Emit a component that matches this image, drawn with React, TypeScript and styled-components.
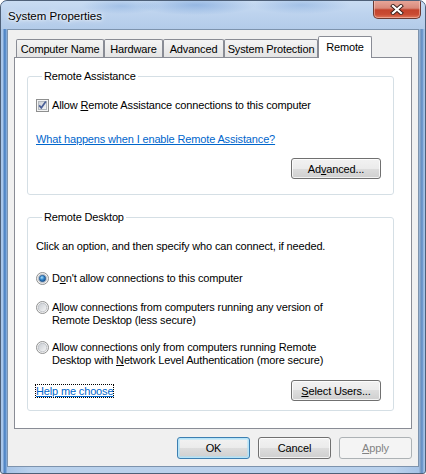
import React from "react";
import styled, { createGlobalStyle } from "styled-components";

const GlobalStyle = createGlobalStyle`
  html, body {
    margin: 0;
    padding: 0;
    background: #ffffff;
  }
  body {
    font-family: "Liberation Sans", Arial, sans-serif;
    font-size: 11px;
    letter-spacing: -0.15px;
    color: #000;
  }
`;

const Window = styled.div`
  width: 426px;
  height: 474px;
  box-sizing: border-box;
  border: 1px solid #4e6078;
  border-radius: 7px 7px 3px 3px;
  overflow: hidden;
  display: flex;
  flex-direction: column;
  background: linear-gradient(
    to right,
    #a9c6e9 0,
    #a9c6e9 2px,
    #4f84c4 3px,
    #5f91cc 5px,
    #a6c3e6 6px,
    #b9d1ec 30px,
    #b9d1ec 394px,
    #a6c3e6 418px,
    #8aa6c6 419px,
    #5d8bc4 421px,
    #a3c2e6 423px
  );
`;

const TitleBar = styled.div`
  height: 28px;
  flex-shrink: 0;
  display: flex;
  justify-content: space-between;
  align-items: flex-start;
  background:
    radial-gradient(ellipse 60px 10px at 195px 4px, rgba(60, 120, 200, 0.35), transparent),
    radial-gradient(ellipse 40px 8px at 120px 5px, rgba(60, 120, 200, 0.25), transparent),
    radial-gradient(ellipse 50px 9px at 300px 4px, rgba(60, 120, 200, 0.25), transparent),
    linear-gradient(to bottom, #c9dcf2 0%, #bdd3ee 45%, #b3cbe9 100%);
`;

const Title = styled.span`
  margin: 8px 0 0 7px;
  font-size: 11.5px;
  letter-spacing: 0;
  line-height: 14px;
  color: #000;
  text-shadow: 0 0 6px #ffffff, 0 0 3px #ffffff;
`;

const CloseButton = styled.div`
  width: 48px;
  height: 19px;
  margin: -1px 4px 0 0;
  box-sizing: border-box;
  border: 1px solid #6b3a33;
  border-top: none;
  border-radius: 0 0 5px 5px;
  display: flex;
  align-items: center;
  justify-content: center;
  background: linear-gradient(
    to bottom,
    #e9a99c 0%,
    #d98a7b 45%,
    #c4432d 55%,
    #c94b33 80%,
    #e0775c 100%
  );
  box-shadow: inset 0 0 0 1px rgba(255, 220, 210, 0.45);
`;

const Client = styled.div`
  flex: 1;
  margin: 0 6px 6px;
  border: 1px solid #7d93ad;
  background: #f0f0f0;
  display: flex;
  flex-direction: column;
  padding: 6px 6px 0 6px;
`;

const TabStrip = styled.div`
  display: flex;
  align-items: flex-end;
  height: 21px;
  padding-left: 2px;
  position: relative;
  z-index: 1;
`;

const Tab = styled.div<{ $w: number; $active?: boolean }>`
  width: ${(p) => p.$w}px;
  box-sizing: border-box;
  height: ${(p) => (p.$active ? 22 : 18)}px;
  margin-bottom: ${(p) => (p.$active ? -1 : 0)}px;
  border: 1px solid #898c95;
  border-bottom: none;
  border-radius: 2px 2px 0 0;
  background: ${(p) =>
    p.$active ? "#ffffff" : "linear-gradient(to bottom, #f4f4f4, #e4e4e4)"};
  display: flex;
  justify-content: center;
  padding-top: ${(p) => (p.$active ? 4 : 3)}px;
  line-height: 13px;
`;

const Panel = styled.div`
  height: 372px;
  box-sizing: border-box;
  border: 1px solid #898c95;
  background: #ffffff;
  padding: 12px 17px 0 12px;
  display: flex;
  flex-direction: column;
  gap: 16px;
`;

const Group = styled.fieldset<{ $pad: string }>`
  margin: 0;
  min-width: 0;
  border: 1px solid #d5dfe5;
  border-radius: 3px;
  padding: ${(p) => p.$pad};
  display: flex;
  flex-direction: column;
`;

const Legend = styled.legend`
  margin-left: 6px;
  padding: 0 2px;
  line-height: 13px;
`;

const OptionRow = styled.div<{ $top: number }>`
  display: flex;
  align-items: flex-start;
  gap: 3px;
  margin-top: ${(p) => p.$top}px;
  line-height: 13px;
`;

const Text = styled.div<{ $top: number }>`
  margin-top: ${(p) => p.$top}px;
  line-height: 13px;
`;

const Link = styled.span<{ $focus?: boolean }>`
  color: #0066cc;
  text-decoration: underline;
  outline: ${(p) => (p.$focus ? "1px dotted #000" : "none")};
`;

const LinkLine = styled.div<{ $top: number }>`
  margin-top: ${(p) => p.$top}px;
  line-height: 13px;
`;

const ActionRow = styled.div<{ $top: number }>`
  display: flex;
  align-items: center;
  justify-content: space-between;
  margin-top: ${(p) => p.$top}px;
  padding-right: 1px;
`;

const Button = styled.div<{ $w: number; $default?: boolean; $disabled?: boolean }>`
  width: ${(p) => p.$w}px;
  height: ${(p) => (p.$w === 73 ? 22 : 21)}px;
  box-sizing: border-box;
  border: 1px solid
    ${(p) => (p.$default ? "#3c7fb1" : p.$disabled ? "#adb2b5" : "#707070")};
  border-radius: 3px;
  display: flex;
  align-items: center;
  justify-content: center;
  color: ${(p) => (p.$disabled ? "#838383" : "#000")};
  background: ${(p) =>
    p.$disabled
      ? "#f4f4f4"
      : "linear-gradient(to bottom, #f2f2f2 0%, #ebebeb 50%, #dddddd 50%, #cfcfcf 100%)"};
  box-shadow: ${(p) =>
    p.$default
      ? "inset 0 0 0 1px #b6e4f9, inset 0 0 0 2px rgba(170, 225, 250, 0.5)"
      : p.$disabled
      ? "none"
      : "inset 0 0 0 1px rgba(255, 255, 255, 0.75)"};
`;

const DialogButtons = styled.div`
  display: flex;
  justify-content: flex-end;
  gap: 8px;
  margin-top: 8px;
  padding-right: 0;
`;

const CheckBox = () => (
  <svg width="13" height="13" viewBox="0 0 13 13">
    <defs>
      <linearGradient id="cbg" x1="0" y1="0" x2="1" y2="1">
        <stop offset="0" stopColor="#cbcfd5" />
        <stop offset="1" stopColor="#f6f6f6" />
      </linearGradient>
    </defs>
    <rect x="0.5" y="0.5" width="12" height="12" fill="#f4f4f4" stroke="#8e8f8f" />
    <rect x="2.5" y="2.5" width="8" height="8" fill="url(#cbg)" stroke="#b3b8be" />
    <path d="M3.2 6.4 L5.3 8.8 L9.8 2.6" fill="none" stroke="#4a5f97" strokeWidth="1.7" />
  </svg>
);

const Radio = ({ checked }: { checked?: boolean }) => (
  <svg width="13" height="13" viewBox="0 0 13 13">
    <defs>
      <linearGradient id="rbg" x1="0" y1="0" x2="1" y2="1">
        <stop offset="0" stopColor="#c6cbd1" />
        <stop offset="1" stopColor="#f7f7f7" />
      </linearGradient>
      <radialGradient id="rdot" cx="0.4" cy="0.35" r="0.7">
        <stop offset="0" stopColor="#a9e0fb" />
        <stop offset="0.5" stopColor="#2f82c9" />
        <stop offset="1" stopColor="#164e8c" />
      </radialGradient>
    </defs>
    <circle cx="6.5" cy="6.5" r="6" fill="#f4f4f4" stroke="#8e8f8f" />
    <circle cx="6.5" cy="6.5" r="4.3" fill="url(#rbg)" stroke="#b5b9bf" strokeWidth="0.8" />
    {checked && <circle cx="6.5" cy="6.5" r="3.2" fill="url(#rdot)" stroke="#1c4d83" strokeWidth="0.6" />}
  </svg>
);

const CloseGlyph = () => (
  <svg width="14" height="11" viewBox="0 0 14 11">
    <path d="M3 2 L11 9 M11 2 L3 9" stroke="#3b1f1b" strokeWidth="4" strokeLinecap="square" />
    <path d="M3 2 L11 9 M11 2 L3 9" stroke="#ffffff" strokeWidth="2.2" strokeLinecap="square" />
  </svg>
);

const tabs: [string, number][] = [
  ["Computer Name", 88],
  ["Hardware", 59],
  ["Advanced", 61],
  ["System Protection", 94],
];

export default function App() {
  return (
    <>
      <GlobalStyle />
      <Window>
        <TitleBar>
          <Title>System Properties</Title>
          <CloseButton>
            <CloseGlyph />
          </CloseButton>
        </TitleBar>
        <Client>
          <TabStrip>
            {tabs.map(([label, w]) => (
              <Tab key={label} $w={w}>
                {label}
              </Tab>
            ))}
            <Tab $w={54} $active>
              Remote
            </Tab>
          </TabStrip>
          <Panel>
            <Group $pad="0 11px 15px 8px">
              <Legend>Remote Assistance</Legend>
              <OptionRow $top={16}>
                <CheckBox />
                <span>
                  Allow <u>R</u>emote Assistance connections to this computer
                </span>
              </OptionRow>
              <LinkLine $top={21}>
                <Link>What happens when I enable Remote Assistance?</Link>
              </LinkLine>
              <ActionRow $top={12}>
                <span />
                <Button $w={90}>
                  Ad<u>v</u>anced...
                </Button>
              </ActionRow>
            </Group>
            <Group $pad="0 11px 9px 8px">
              <Legend>Remote Desktop</Legend>
              <Text $top={16}>Click an option, and then specify who can connect, if needed.</Text>
              <OptionRow $top={19}>
                <Radio checked />
                <span>
                  D<u>o</u>n't allow connections to this computer
                </span>
              </OptionRow>
              <OptionRow $top={16}>
                <Radio />
                <span>
                  A<u>l</u>low connections from computers running any version of
                  <br />
                  Remote Desktop (less secure)
                </span>
              </OptionRow>
              <OptionRow $top={14}>
                <Radio />
                <span>
                  Allow connections only from computers running Remote
                  <br />
                  Desktop with <u>N</u>etwork Level Authentication (more secure)
                </span>
              </OptionRow>
              <ActionRow $top={13}>
                <Link $focus>Help me choose</Link>
                <Button $w={90}>
                  <u>S</u>elect Users...
                </Button>
              </ActionRow>
            </Group>
          </Panel>
          <DialogButtons>
            <Button $w={73} $default>
              OK
            </Button>
            <Button $w={73}>Cancel</Button>
            <Button $w={73} $disabled>
              <u>A</u>pply
            </Button>
          </DialogButtons>
        </Client>
      </Window>
    </>
  );
}
